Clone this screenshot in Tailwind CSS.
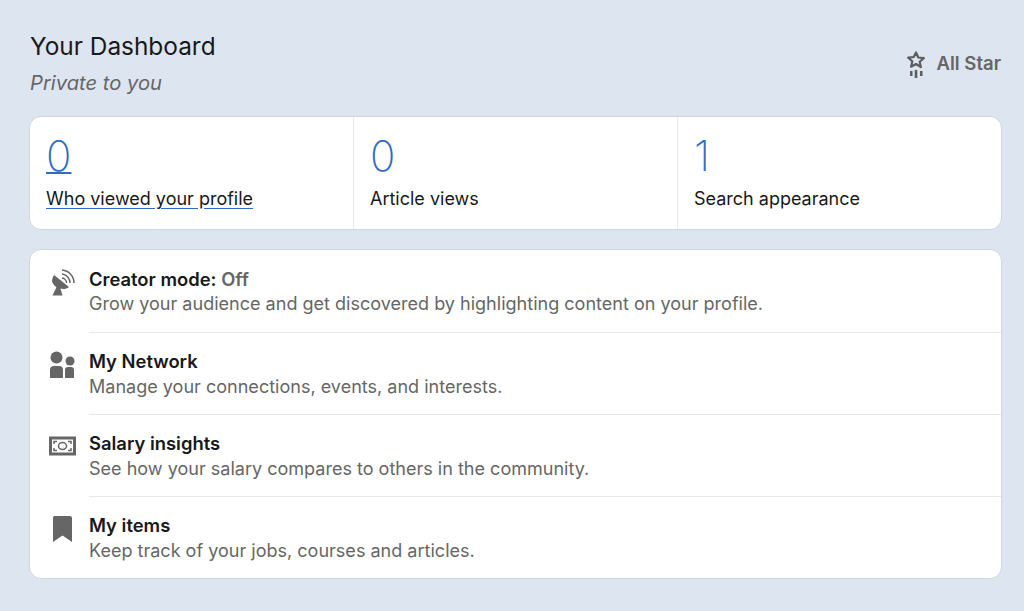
<!DOCTYPE html>
<html lang="en">
<head>
  <meta charset="UTF-8" />
  <title>Your Dashboard</title>
  <script src="https://cdn.jsdelivr.net/npm/@tailwindcss/browser@4"></script>
</head>
<body class="bg-[#dde5f0] font-['Inter',sans-serif] w-[1024px] h-[611px] overflow-hidden">
  <main class="pl-[29px] pr-[22px] pt-[29px]">
    <header class="flex items-start justify-between pr-px">
      <div class="pl-px">
        <h2 class="text-[24.4px] leading-[35px] text-[#191919]">Your Dashboard</h2>
        <p class="text-[20.2px] leading-[26px] mt-[6px] italic text-[#666666]">Private to you</p>
      </div>
      <div class="flex items-center gap-[11px] mt-[21px]">
        <svg width="20" height="28" viewBox="0 0 20 28" class="text-[#5e5e5e]">
          <path d="M10 2.500l2.300 5 5.500.6-4.100 3.700 1.200 5.400L10 14l-4.900 2.700 1.200-5.400-4.100-3.700 5.500-.6z" fill="none" stroke="currentColor" stroke-width="2.200" stroke-linejoin="round"/>
          <path d="M4 21h2.500v5H4zM8.700 20h2.600v8H8.700zM14 21h2.500v5H14z" fill="currentColor"/>
        </svg>
        <span class="text-[18.500px] font-semibold text-[#666666]">All Star</span>
      </div>
    </header>

    <section class="mt-[20px] h-[114px] bg-white rounded-[12px] border border-[#cfd6de] grid grid-cols-[324px_324px_1fr]">
      <a class="pl-4 pt-[16px] border-r border-[#e8e8e8]">
        <div class="text-[42px] leading-[46px] font-extralight text-[#2f6bc4] underline decoration-2 underline-offset-[1px]">0</div>
        <div class="text-[18px] leading-[24px] mt-[8px] text-[#191919] underline decoration-[#2f6bc4] underline-offset-[3px]">Who viewed your profile</div>
      </a>
      <a class="pl-4 pt-[16px] border-r border-[#e8e8e8]">
        <div class="text-[42px] leading-[46px] font-extralight text-[#2f6bc4]">0</div>
        <div class="text-[18px] leading-[24px] mt-[8px] text-[#191919]">Article views</div>
      </a>
      <a class="pl-4 pt-[16px]">
        <div class="text-[42px] leading-[46px] font-extralight text-[#2f6bc4]">1</div>
        <div class="text-[18px] leading-[24px] mt-[8px] text-[#191919]">Search appearance</div>
      </a>
    </section>

    <section class="mt-[19px] h-[330px] bg-white rounded-[12px] border border-[#cfd6de] pt-[7px]">
      <div class="flex h-[76px]">
        <div class="w-[59px] pl-[20px] pt-[11px] shrink-0">
          <svg width="26" height="28" viewBox="0 0 26 28" class="text-[#666666]">
            <path d="M4 7L19 19C13 24 3 19 2 13C2 11 3 9 4 7z" fill="currentColor"/>
            <path d="M7 18l-4.500 9.500h10L10 19z" fill="currentColor"/>
            <path d="M12 10a5 5 0 0 1 4.500 5M12 6a9 9 0 0 1 8 9M12 2a13 13 0 0 1 12 13" fill="none" stroke="currentColor" stroke-width="1.500"/>
          </svg>
        </div>
        <div class="flex-1 border-b border-[#e8e8e8]">
          <div class="text-[18.400px] leading-[26px] pt-[9px] font-semibold text-[#191919]">Creator mode: <span class="text-[#666666]">Off</span></div>
          <div class="text-[18.050px] leading-[24px] text-[#666666]">Grow your audience and get discovered by highlighting content on your profile.</div>
        </div>
      </div>
      <div class="flex h-[82px]">
        <div class="w-[59px] pl-[20px] pt-[18px] shrink-0">
          <svg width="26" height="28" viewBox="0 0 26 28" class="text-[#666666]">
            <circle cx="6.500" cy="6.500" r="6" fill="currentColor"/>
            <circle cx="20" cy="10" r="4.500" fill="currentColor"/>
            <path d="M0 27v-8a4 4 0 0 1 4-4h5a4 4 0 0 1 4 4v8zM15 27v-8a3 3 0 0 1 3-3h3a3 3 0 0 1 3 3v8z" fill="currentColor"/>
          </svg>
        </div>
        <div class="flex-1 border-b border-[#e8e8e8]">
          <div class="text-[18.400px] leading-[26px] pt-[15px] font-semibold text-[#191919]">My Network</div>
          <div class="text-[18.050px] leading-[24px] mt-px text-[#666666]">Manage your connections, events, and interests.</div>
        </div>
      </div>
      <div class="flex h-[82px]">
        <div class="w-[59px] pl-[19px] pt-[21px] shrink-0">
          <svg width="27" height="20" viewBox="0 0 27 20" class="text-[#666666]">
            <path d="M1.500 2h24v16h-24z" fill="none" stroke="currentColor" stroke-width="3"/>
            <ellipse cx="13.500" cy="10" rx="4" ry="3.500" fill="none" stroke="currentColor" stroke-width="1.500"/>
            <path d="M5 8V5.500h3M22 8V5.500h-3M5 12v2.500h3M22 12v2.500h-3" fill="none" stroke="currentColor" stroke-width="1.500"/>
          </svg>
        </div>
        <div class="flex-1 border-b border-[#e8e8e8]">
          <div class="text-[18.400px] leading-[26px] pt-[15px] font-semibold text-[#191919]">Salary insights</div>
          <div class="text-[18.050px] leading-[24px] mt-px text-[#666666]">See how your salary compares to others in the community.</div>
        </div>
      </div>
      <div class="flex">
        <div class="w-[59px] pl-[22px] pt-[18px] shrink-0">
          <svg width="20" height="28" viewBox="0 0 20 28" class="text-[#666666]">
            <path d="M1 2.500A1.500 1.500 0 0 1 2.500 1H18a2 2 0 0 1 2 2v24l-9.500-6.500L1 27z" fill="currentColor"/>
          </svg>
        </div>
        <div class="flex-1">
          <div class="text-[18.400px] leading-[26px] pt-[15px] font-semibold text-[#191919]">My items</div>
          <div class="text-[18.050px] leading-[24px] mt-px text-[#666666]">Keep track of your jobs, courses and articles.</div>
        </div>
      </div>
    </section>
  </main>
</body>
</html>
